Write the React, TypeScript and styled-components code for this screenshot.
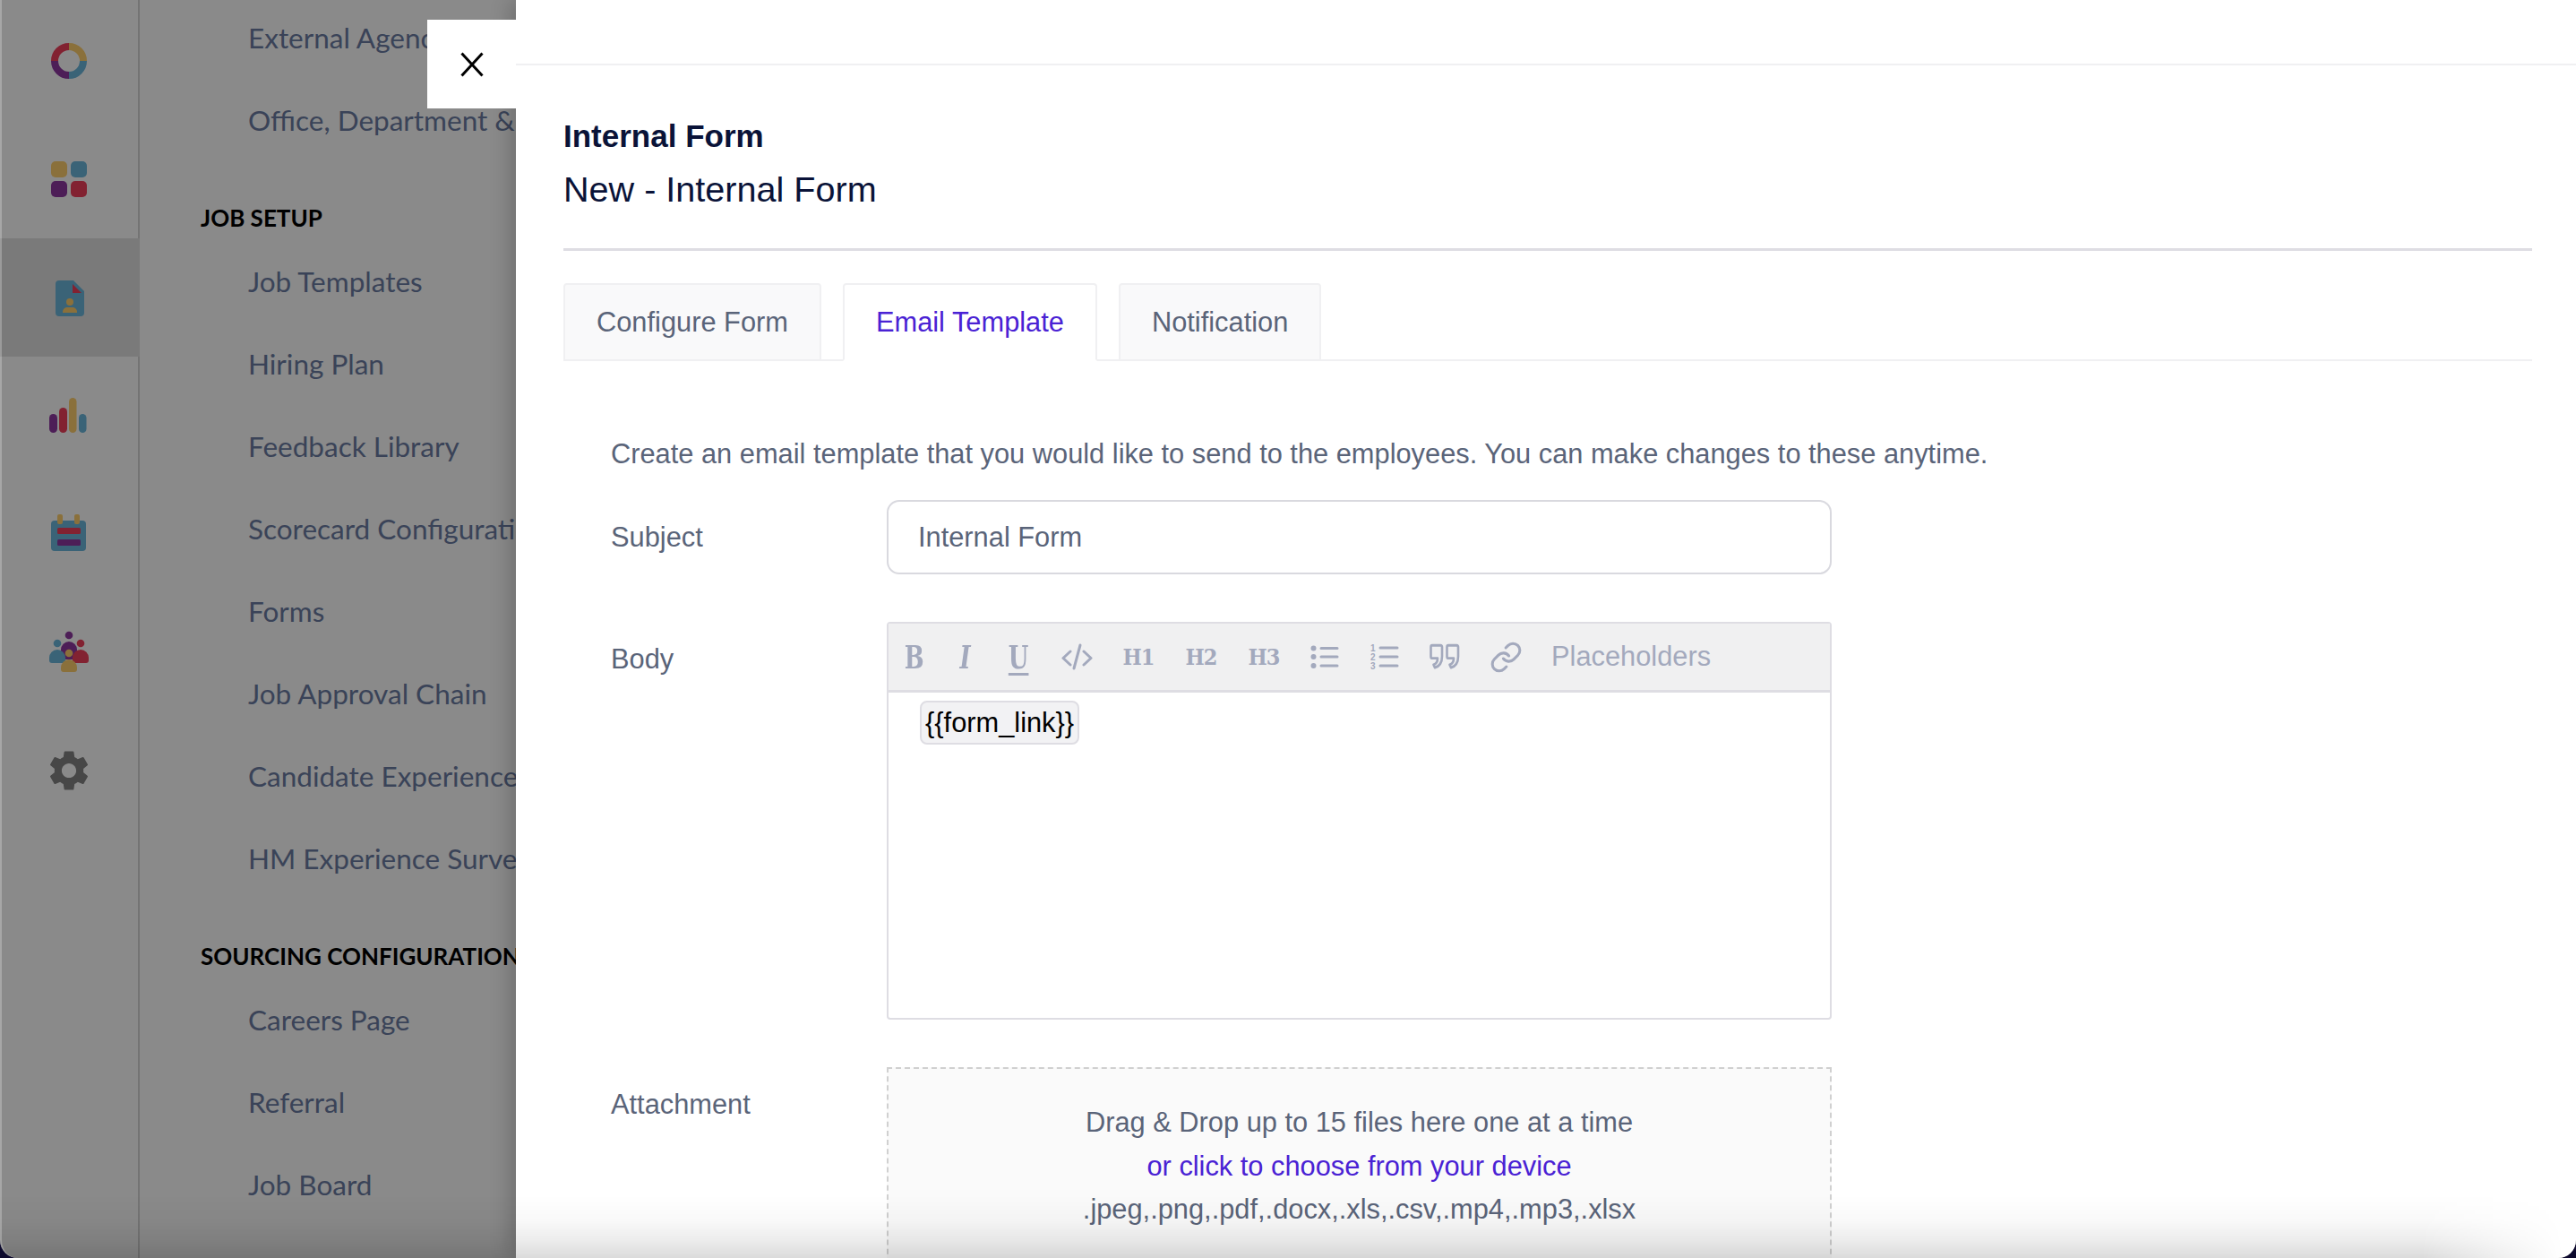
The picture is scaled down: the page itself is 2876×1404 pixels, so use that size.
import styled, { createGlobalStyle } from "styled-components";
import { Link as LinkIcon } from "lucide-react";
import { MdSettings } from "react-icons/md";

const YELLOW = "#ffcf6e";
const TEAL = "#6bb7dc";
const PURPLE = "#8f38a2";
const RED = "#f0405c";

const GlobalStyle = createGlobalStyle`
  html, body {
    margin: 0;
    padding: 0;
    height: 100%;
    background: #0d0a2e;
    overflow: hidden;
  }
  #root {
    height: 100%;
  }
  * {
    box-sizing: border-box;
  }
`;

const Window = styled.div`
  position: relative;
  display: flex;
  width: 2876px;
  height: 1404px;
  overflow: hidden;
  background: #fff;
  border-radius: 0 0 20px 20px;
  font-family: "Liberation Sans", Arial, sans-serif;
`;

const Rail = styled.aside`
  display: flex;
  flex-direction: column;
  flex: 0 0 156px;
  padding-top: 2px;
  border-right: 2px solid #d6d6d6;
`;

const RailItem = styled.div<{ $active?: boolean }>`
  display: flex;
  flex: 0 0 132px;
  align-items: center;
  justify-content: center;
  background: ${({ $active }) => ($active ? "#e2e2e2" : "transparent")};
  margin-right: ${({ $active }) => ($active ? "-2px" : "0")};
`;

const SideNav = styled.nav`
  display: flex;
  flex: 0 0 420px;
  flex-direction: column;
  margin-top: -4px;
  padding-left: 68px;
  overflow: hidden;
  font-family: Lato, "Open Sans", sans-serif;
  white-space: nowrap;
`;

const NavHeading = styled.div`
  display: flex;
  flex: 0 0 88px;
  align-items: flex-end;
  padding-bottom: 9px;
  color: #000;
  font-size: 26px;
  font-weight: 700;
`;

const NavLink = styled.div`
  display: flex;
  flex: 0 0 92px;
  align-items: center;
  padding-left: 53px;
  color: #6b7ca3;
  font-size: 31.500px;
`;

const Scrim = styled.div`
  position: absolute;
  inset: 0;
  background: rgba(0, 0, 0, 0.46);
`;

const Drawer = styled.section`
  position: absolute;
  top: 0;
  right: 0;
  bottom: 0;
  left: 576px;
  background: #fff;
  box-shadow: -6px 0 22px rgba(0, 0, 0, 0.2);
`;

const CloseButton = styled.button`
  position: absolute;
  top: 22px;
  left: -99px;
  display: flex;
  align-items: center;
  justify-content: center;
  width: 99px;
  height: 99px;
  padding: 0;
  border: 0;
  background: #fff;
`;

const TopBar = styled.div`
  height: 73px;
  border-bottom: 2px solid #f0f0f2;
`;

const DrawerBody = styled.div`
  display: flex;
  flex-direction: column;
  padding: 59px 49px 0 53px;
`;

const Title = styled.div`
  color: #0a1338;
  font-size: 35px;
  font-weight: 700;
  line-height: 40px;
`;

const SubTitle = styled.div`
  margin-top: 17px;
  color: #0a1338;
  font-size: 39.600px;
  line-height: 44px;
`;

const Divider = styled.div`
  height: 3px;
  margin-top: 44px;
  background: #dedde3;
`;

const Tabs = styled.div`
  display: flex;
  gap: 24px;
  margin-top: 36px;
  border-bottom: 2px solid #f0f0f2;
`;

const Tab = styled.div<{ $active?: boolean }>`
  display: flex;
  align-items: center;
  height: 87px;
  margin-bottom: -2px;
  padding: 0 35px;
  border: 2px solid #f0f0f2;
  border-bottom-color: ${({ $active }) => ($active ? "#fff" : "#f0f0f2")};
  border-radius: 4px 4px 0 0;
  background: ${({ $active }) => ($active ? "#fff" : "#f9f9fa")};
  color: ${({ $active }) => ($active ? "#4a22d4" : "#5a6479")};
  font-size: 30.800px;
`;

const TabContent = styled.div`
  display: flex;
  flex-direction: column;
  padding-left: 53px;
`;

const Description = styled.p`
  margin: 84px 0 0;
  color: #5a6479;
  font-size: 30.800px;
  line-height: 40px;
`;

const FormRow = styled.div<{ $gap: number }>`
  display: flex;
  margin-top: ${({ $gap }) => $gap}px;
`;

const RowLabel = styled.label<{ $center?: boolean }>`
  flex: 0 0 308px;
  align-self: ${({ $center }) => ($center ? "center" : "flex-start")};
  padding-top: ${({ $center }) => ($center ? "0" : "22px")};
  color: #5a6479;
  font-size: 30.800px;
  line-height: 40px;
`;

const TextInput = styled.div`
  display: flex;
  align-items: center;
  width: 1055px;
  height: 83px;
  padding-left: 33px;
  border: 2px solid #d9d9df;
  border-radius: 14px;
  color: #5a6479;
  font-size: 30.800px;
`;

const Editor = styled.div`
  display: flex;
  flex-direction: column;
  width: 1055px;
  height: 444px;
  border: 2px solid #dedde3;
  border-radius: 4px;
`;

const Toolbar = styled.div`
  display: flex;
  flex: 0 0 77px;
  align-items: center;
  padding-left: 1px;
  border-bottom: 3px solid #dedde3;
  background: #f0f0f1;
  color: #a3a9bd;
`;

const ToolButton = styled.span<{ $w: number }>`
  display: flex;
  flex: 0 0 ${({ $w }) => $w}px;
  align-items: center;
  justify-content: center;
`;

const GlyphBig = styled.span<{ $italic?: boolean; $underline?: boolean }>`
  display: inline-block;
  font-family: "DejaVu Serif Condensed", "DejaVu Serif", serif;
  font-size: 36px;
  font-style: ${({ $italic }) => ($italic ? "italic" : "normal")};
  font-weight: 700;
  line-height: 36px;
  text-decoration: ${({ $underline }) => ($underline ? "underline" : "none")};
  text-decoration-thickness: 3px;
  text-underline-offset: 5px;
  transform: scaleX(0.8);
`;

const GlyphHeading = styled.span`
  font-family: "DejaVu Serif Condensed", "DejaVu Serif", serif;
  font-size: 25px;
  font-weight: 700;
  letter-spacing: -1px;
`;

const PlaceholderLabel = styled.span`
  margin-left: 17px;
  font-size: 30.800px;
`;

const EditorArea = styled.div`
  padding: 9px 0 0 35px;
`;

const PlaceholderChip = styled.span`
  display: inline-flex;
  align-items: center;
  height: 49px;
  padding: 0 4px;
  border: 2px solid #dedde3;
  border-radius: 8px;
  background: #f2f2f4;
  color: #000;
  font-size: 30.800px;
`;

const DropZone = styled.div`
  display: flex;
  flex-direction: column;
  align-items: center;
  width: 1055px;
  height: 300px;
  padding-top: 36px;
  border: 2px dashed #d0d0d0;
  background: #fafafa;
  color: #5a6479;
  font-size: 30.800px;
  line-height: 48.500px;
`;

const DropLink = styled.span`
  color: #4a22d4;
`;

const BottomFade = styled.div`
  position: absolute;
  right: 0;
  bottom: 0;
  left: 0;
  height: 70px;
  background: linear-gradient(
    to bottom,
    rgba(0, 0, 0, 0),
    rgba(0, 0, 0, 0.025) 40%,
    rgba(0, 0, 0, 0.07) 70%,
    rgba(0, 0, 0, 0.14)
  );
  mask-image: linear-gradient(to right, #000 94%, transparent 99.500%);
  pointer-events: none;
`;

const WindowEdge = styled.div`
  position: absolute;
  inset: 0;
  border-left: 2px solid rgba(255, 255, 255, 0.25);
  border-bottom-left-radius: 20px;
  pointer-events: none;
`;

const RailSvg = styled.svg`
  display: block;
  width: 48px;
  height: 48px;
  overflow: visible;
`;

const GearIcon = styled(MdSettings)`
  display: block;
  color: #838383;
`;

function RingIcon() {
  return (
    <RailSvg viewBox="0 0 48 48" fill="none" strokeWidth="8">
      <path d="M24 8A16 16 0 0 1 40 24" stroke={YELLOW} />
      <path d="M40 24A16 16 0 0 1 24 40" stroke={TEAL} />
      <path d="M24 40A16 16 0 0 1 8 24" stroke={PURPLE} />
      <path d="M8 24A16 16 0 0 1 24 8" stroke={RED} />
    </RailSvg>
  );
}

function GridIcon() {
  return (
    <RailSvg viewBox="0 0 48 48">
      <rect x="4" y="4" width="18" height="18" rx="5" fill={YELLOW} />
      <rect x="26" y="4" width="18" height="18" rx="5" fill={TEAL} />
      <rect x="4" y="26" width="18" height="18" rx="5" fill={PURPLE} />
      <rect x="26" y="26" width="18" height="18" rx="5" fill={RED} />
    </RailSvg>
  );
}

function DocIcon() {
  return (
    <RailSvg viewBox="0 0 48 48">
      <path d="M12 5H28L40 17V41a4 4 0 0 1-4 4H12a4 4 0 0 1-4-4V9a4 4 0 0 1 4-4z" fill={TEAL} />
      <path d="M27 9V19H37z" fill={RED} />
      <circle cx="24" cy="29" r="4" fill={YELLOW} />
      <path d="M16 41v-1a5 5 0 0 1 5-5h6a5 5 0 0 1 5 5v1z" fill={YELLOW} />
    </RailSvg>
  );
}

function BarsIcon() {
  return (
    <RailSvg viewBox="0 0 48 48">
      <rect x="2" y="22" width="9" height="21" rx="4.5" fill={PURPLE} />
      <rect x="13" y="15" width="9" height="28" rx="4.5" fill={RED} />
      <rect x="24" y="4" width="8.5" height="39" rx="4.25" fill={YELLOW} />
      <rect x="35" y="22" width="8.5" height="21" rx="4.25" fill={TEAL} />
    </RailSvg>
  );
}

function CalendarIcon() {
  return (
    <RailSvg viewBox="0 0 48 48">
      <rect x="4" y="9" width="39" height="34" rx="4" fill={TEAL} />
      <rect x="11" y="2" width="6" height="11" rx="2" fill={YELLOW} />
      <rect x="30" y="2" width="6" height="11" rx="2" fill={YELLOW} />
      <rect x="11" y="17" width="26" height="7" rx="1.5" fill={RED} />
      <rect x="11" y="30" width="26" height="7" rx="1.5" fill={PURPLE} />
    </RailSvg>
  );
}

function PeopleIcon() {
  return (
    <RailSvg viewBox="0 0 48 48">
      <circle cx="24" cy="5" r="4.3" fill={PURPLE} />
      <path d="M15 32V21a9 9 0 0 1 18 0v11z" fill={PURPLE} />
      <circle cx="11" cy="14" r="4.3" fill={TEAL} />
      <path d="M2 33v-3a9 9 0 0 1 18 0v3a3 3 0 0 1-3 3H5a3 3 0 0 1-3-3z" fill={TEAL} />
      <circle cx="37" cy="14" r="4.3" fill={RED} />
      <path d="M28 33v-3a9 9 0 0 1 18 0v3a3 3 0 0 1-3 3H31a3 3 0 0 1-3-3z" fill={RED} />
      <circle cx="24" cy="25" r="4.3" fill={YELLOW} />
      <path d="M15 43v-2a9 9 0 0 1 18 0v2a3 3 0 0 1-3 3H18a3 3 0 0 1-3-3z" fill={YELLOW} />
    </RailSvg>
  );
}

function CodeIcon() {
  return (
    <svg width="35" height="30" viewBox="0 0 35 30" fill="none" stroke="currentColor" strokeWidth="3" strokeLinecap="round" strokeLinejoin="round">
      <path d="M10 9L2 16.5L10 24" />
      <path d="M25 9L33 16.5L25 24" />
      <path d="M21 2L14 28" />
    </svg>
  );
}

function BulletListIcon() {
  return (
    <svg width="32" height="28" viewBox="0 0 32 28" fill="none" stroke="currentColor" strokeWidth="3" strokeLinecap="round">
      <path d="M12 4.5H30M12 14H30M12 24H30" />
      <g fill="currentColor" stroke="none">
        <circle cx="3.5" cy="4.5" r="3" />
        <circle cx="3.5" cy="14" r="3" />
        <circle cx="3.5" cy="24" r="3" />
      </g>
    </svg>
  );
}

function NumberListIcon() {
  return (
    <svg width="32" height="30" viewBox="0 0 32 30" fill="none" stroke="currentColor" strokeWidth="3" strokeLinecap="round">
      <path d="M11 5H30M11 15H30M11 25H30" />
      <g fill="currentColor" stroke="none" fontFamily="Liberation Sans" fontSize="10" fontWeight="700">
        <text x="0" y="9">1</text>
        <text x="0" y="19">2</text>
        <text x="0" y="29">3</text>
      </g>
    </svg>
  );
}

const quoteMark = "M3 2h9.500A1.500 1.500 0 0 1 14 3.500V13c0 6-3 10-8 11.500l-1.500-3c3-1 4.500-3 4.500-6.500H3A1.500 1.500 0 0 1 1.500 13.500V3.500A1.500 1.500 0 0 1 3 2z";

function QuoteIcon() {
  return (
    <svg width="34" height="30" viewBox="0 0 34 27" preserveAspectRatio="none" fill="none" stroke="currentColor" strokeWidth="2.6" strokeLinejoin="round">
      <path d={quoteMark} />
      <path transform="translate(18 0)" d={quoteMark} />
    </svg>
  );
}

const jobSetup = [
  "Job Templates",
  "Hiring Plan",
  "Feedback Library",
  "Scorecard Configuration",
  "Forms",
  "Job Approval Chain",
  "Candidate Experience Survey",
  "HM Experience Survey",
];

const sourcing = ["Careers Page", "Referral", "Job Board"];

export default function App() {
  return (
    <>
      <GlobalStyle />
      <Window>
        <Rail>
          <RailItem><RingIcon /></RailItem>
          <RailItem><GridIcon /></RailItem>
          <RailItem $active><DocIcon /></RailItem>
          <RailItem><BarsIcon /></RailItem>
          <RailItem><CalendarIcon /></RailItem>
          <RailItem><PeopleIcon /></RailItem>
          <RailItem><GearIcon size={54} /></RailItem>
        </Rail>
        <SideNav>
          <NavLink>External Agencies</NavLink>
          <NavLink>Office, Department &amp; Group</NavLink>
          <NavHeading>JOB SETUP</NavHeading>
          {jobSetup.map((label) => (
            <NavLink key={label}>{label}</NavLink>
          ))}
          <NavHeading>SOURCING CONFIGURATION</NavHeading>
          {sourcing.map((label) => (
            <NavLink key={label}>{label}</NavLink>
          ))}
        </SideNav>
        <Scrim />
        <Drawer>
          <CloseButton>
            <svg width="26" height="28" viewBox="0 0 26 28" fill="none" stroke="#000" strokeWidth="3">
              <path d="M1.500 1.500L24.500 26.500M24.500 1.500L1.500 26.500" />
            </svg>
          </CloseButton>
          <TopBar />
          <DrawerBody>
            <Title>Internal Form</Title>
            <SubTitle>New - Internal Form</SubTitle>
            <Divider />
            <Tabs>
              <Tab>Configure Form</Tab>
              <Tab $active>Email Template</Tab>
              <Tab>Notification</Tab>
            </Tabs>
            <TabContent>
              <Description>
                Create an email template that you would like to send to the employees. You can make changes to these anytime.
              </Description>
              <FormRow $gap={31}>
                <RowLabel $center>Subject</RowLabel>
                <TextInput>Internal Form</TextInput>
              </FormRow>
              <FormRow $gap={53}>
                <RowLabel>Body</RowLabel>
                <Editor>
                  <Toolbar>
                    <ToolButton $w={56}><GlyphBig>B</GlyphBig></ToolButton>
                    <ToolButton $w={57}><GlyphBig $italic>I</GlyphBig></ToolButton>
                    <ToolButton $w={62}><GlyphBig $underline>U</GlyphBig></ToolButton>
                    <ToolButton $w={68}><CodeIcon /></ToolButton>
                    <ToolButton $w={70}><GlyphHeading>H1</GlyphHeading></ToolButton>
                    <ToolButton $w={70}><GlyphHeading>H2</GlyphHeading></ToolButton>
                    <ToolButton $w={70}><GlyphHeading>H3</GlyphHeading></ToolButton>
                    <ToolButton $w={66}><BulletListIcon /></ToolButton>
                    <ToolButton $w={67}><NumberListIcon /></ToolButton>
                    <ToolButton $w={68}><QuoteIcon /></ToolButton>
                    <ToolButton $w={68}><LinkIcon size={37} strokeWidth={2} /></ToolButton>
                    <PlaceholderLabel>Placeholders</PlaceholderLabel>
                  </Toolbar>
                  <EditorArea>
                    <PlaceholderChip>{"{{form_link}}"}</PlaceholderChip>
                  </EditorArea>
                </Editor>
              </FormRow>
              <FormRow $gap={53}>
                <RowLabel>Attachment</RowLabel>
                <DropZone>
                  <span>Drag &amp; Drop up to 15 files here one at a time</span>
                  <DropLink>or click to choose from your device</DropLink>
                  <span>.jpeg,.png,.pdf,.docx,.xls,.csv,.mp4,.mp3,.xlsx</span>
                </DropZone>
              </FormRow>
            </TabContent>
          </DrawerBody>
        </Drawer>
        <BottomFade />
        <WindowEdge />
      </Window>
    </>
  );
}
